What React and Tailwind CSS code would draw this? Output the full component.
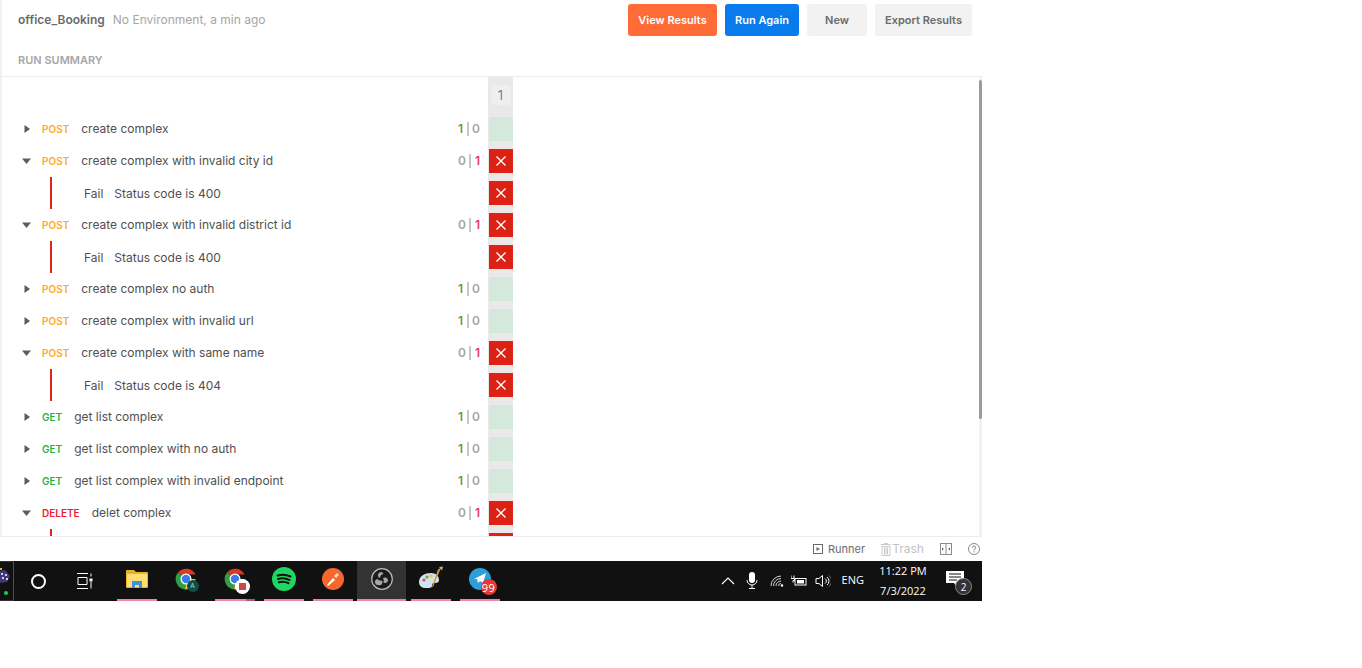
import React from 'react';

const rows = [
  { method: 'POST', name: 'create complex', pass: true },
  { method: 'POST', name: 'create complex with invalid city id', pass: false },
  { fail: 'Status code is 400' },
  { method: 'POST', name: 'create complex with invalid district id', pass: false },
  { fail: 'Status code is 400' },
  { method: 'POST', name: 'create complex no auth', pass: true },
  { method: 'POST', name: 'create complex with invalid url', pass: true },
  { method: 'POST', name: 'create complex with same name', pass: false },
  { fail: 'Status code is 404' },
  { method: 'GET', name: 'get list complex', pass: true },
  { method: 'GET', name: 'get list complex with no auth', pass: true },
  { method: 'GET', name: 'get list complex with invalid endpoint', pass: true },
  { method: 'DELETE', name: 'delet complex', pass: false },
  { fail: '' },
];

const methodColors = {
  POST: 'text-[#ffa826]',
  GET: 'text-[#1fb43f]',
  DELETE: 'text-[#ee1c2e]',
};

const CrossCell = () => (
  <div className="w-6 h-6 bg-[#dc2115] flex items-center justify-center">
    <svg width="12" height="12" viewBox="0 0 12 12">
      <path d="M1.5 1.5l9 9M10.5 1.5l-9 9" stroke="#fff" strokeWidth="1.4" />
    </svg>
  </div>
);

const Row = ({ row }) => {
  if (row.fail !== undefined) {
    return (
      <div className="h-8 shrink-0 flex">
        <div className="w-[488px] shrink-0 flex items-center">
          <div className="ml-[50px] w-0.5 h-8 bg-[#e2231a]" />
          <span className="ml-8 pt-px text-xs text-[#505050]">{row.fail && 'Fail'}</span>
          <span className="ml-[11px] pt-px text-xs text-[#505050]">{row.fail}</span>
        </div>
        <div className="w-[25px] shrink-0 pl-px bg-[#e9e9e9] flex items-start pt-1">
          <CrossCell />
        </div>
      </div>
    );
  }
  return (
    <div className="h-8 shrink-0 flex">
      <div className="w-[488px] shrink-0 flex items-center pr-2">
        <div className="w-[42px] pl-[22px] flex">
          {row.pass ? (
            <svg width="8" height="10" viewBox="0 0 8 10" className="ml-0.5">
              <path d="M0.5 1v8L6 5z" fill="#5c5c5c" />
            </svg>
          ) : (
            <svg width="9" height="6" viewBox="0 0 9 6">
              <path d="M0 0.5h9L4.5 6z" fill="#5c5c5c" />
            </svg>
          )}
        </div>
        <span className={`text-[10px] font-semibold ${methodColors[row.method]}`}>{row.method}</span>
        <span className="ml-3 text-xs text-[#505050]">{row.name}</span>
        <div className="ml-auto flex items-center text-xs font-semibold text-[#a6a6a6]">
          <span className={row.pass ? 'text-[#6f9a2a]' : ''}>{row.pass ? 1 : 0}</span>
          <span className="mx-[3.5px] w-0.5 h-[14px] bg-[#c3c7d0]" />
          <span className={row.pass ? '' : 'text-[#e8336d]'}>{row.pass ? 0 : 1}</span>
        </div>
      </div>
      <div className="w-[25px] shrink-0 pl-px bg-[#e9e9e9] flex items-start pt-1">
        {row.pass ? <div className="w-6 h-6 bg-[#d4e9dc]" /> : <CrossCell />}
      </div>
    </div>
  );
};

const TaskSlot = ({ children, active, line = true, split }) => (
  <div className={`relative w-[49px] h-10 flex items-center justify-center ${active ? 'bg-[#333333]' : ''}`}>
    {children}
    {line && <div className={`absolute bottom-0 h-0.5 bg-[#f47fb2] ${active ? 'left-0 right-0' : 'left-[5px] w-10'}`} />}
    {split && <div className="absolute bottom-0 left-9 w-[9px] h-0.5 bg-[#a85a80]" />}
  </div>
);

const Chrome = ({ children }) => (
  <div className="relative w-[22px] h-[22px] -mt-1">
    <svg width="22" height="22" viewBox="0 0 22 22">
      <path d="M11 11L3 4.5A10.5 10.5 0 0 1 20.5 6.5H11z" fill="#d8392b" />
      <path d="M11 11h9.5A10.5 10.5 0 0 1 10 21.5z" fill="#f6c33b" />
      <path d="M11 11l-1 10.5A10.5 10.5 0 0 1 3 4.5z" fill="#2f9e44" />
      <circle cx="11" cy="11" r="5.5" fill="#fff" />
      <circle cx="11" cy="11" r="4.2" fill="#3b7de8" />
    </svg>
    {children}
  </div>
);

export default function App() {
  return (
    <div className="w-[982px] h-[601px] flex flex-col bg-white font-['Inter',sans-serif]">
      {/* Header */}
      <div className="h-[77px] shrink-0 border-b border-[#ececec] border-l-2 border-l-[#f2f2f2] pl-4 pr-[10px]">
        <div className="flex items-center pt-1 h-9">
          <span className="text-xs font-semibold text-[#6b6b6b]">office_Booking</span>
          <span className="ml-2 text-xs text-[#a6a6a6]">No Environment, a min ago</span>
          <div className="ml-auto flex gap-2 text-[11px] font-semibold">
            <button className="w-[89px] h-8 rounded-[3px] bg-[#ff6c37] text-white">View Results</button>
            <button className="w-[74px] h-8 rounded-[3px] bg-[#097bed] text-white">Run Again</button>
            <button className="w-[60px] h-8 rounded-[3px] bg-[#f2f2f2] text-[#6b6b6b]">New</button>
            <button className="w-[97px] h-8 rounded-[3px] bg-[#f2f2f2] text-[#6b6b6b]">Export Results</button>
          </div>
        </div>
        <div className="mt-4 text-[11px] font-semibold text-[#a6a6a6]">RUN SUMMARY</div>
      </div>

      {/* Results */}
      <div className="h-[459px] shrink-0 flex overflow-hidden border-l-2 border-l-[#f2f2f2]">
        <div className="w-[513px] shrink-0 flex flex-col -ml-0.5 overflow-hidden">
          <div className="h-9 shrink-0 flex">
            <div className="w-[488px] shrink-0" />
            <div className="w-[25px] shrink-0 bg-[#e9e9e9] flex items-start justify-center pt-2">
              <div className="w-5 h-5 pt-px rounded-[3px] bg-[#efefef] flex items-center justify-center text-[13px] text-[#808080]">1</div>
            </div>
          </div>
          {rows.map((row, i) => (
            <Row key={i} row={row} />
          ))}
        </div>
        <div className="flex-1" />
        <div className="w-[3px] bg-[#f2f2f2] pt-[3px]">
          <div className="h-[339px] bg-[#9b9b9b] rounded-sm" />
        </div>
      </div>

      {/* Status bar */}
      <div className="h-[25px] shrink-0 border-t border-[#ececec] flex items-center text-[11px] text-[#6b6b6b]">
        <svg width="10" height="10" viewBox="0 0 10 10" className="ml-[813px]">
          <rect x="0.5" y="0.5" width="9" height="9" fill="none" stroke="#6b6b6b" />
          <path d="M3.5 3v4L7 5z" fill="#6b6b6b" />
        </svg>
        <span className="ml-[5px]">Runner</span>
        <svg width="10" height="13" viewBox="0 0 10 13" className="ml-4">
          <path d="M0 1.5h10M3.5 1.5V.5h3v1M1 3.5h8v9H1zM3.5 4.5v7M5 4.5v7M6.5 4.5v7" fill="none" stroke="#bdbdbd" strokeWidth="0.8" />
        </svg>
        <span className="ml-px text-xs text-[#c2c2c2]">Trash</span>
        <svg width="12" height="12" viewBox="0 0 12 12" className="ml-4">
          <rect x="0.5" y="0.5" width="11" height="11" fill="none" stroke="#8a8a8a" />
          <path d="M6 0v12" stroke="#8a8a8a" />
          <path d="M2 4.5L4 6 2 7.5zM10 4.5L8 6l2 1.5z" fill="#6b6b6b" />
        </svg>
        <svg width="12" height="12" viewBox="0 0 12 12" className="ml-4">
          <circle cx="6" cy="6" r="5.5" fill="none" stroke="#8a8a8a" />
          <path d="M4.4 4.6a1.6 1.6 0 1 1 2.4 1.4c-.5.3-.8.6-.8 1.2M6 8.3v1" fill="none" stroke="#6b6b6b" />
        </svg>
      </div>

      {/* Windows taskbar */}
      <div className="h-10 shrink-0 bg-[#111111] flex items-center text-white font-['Open_Sans',sans-serif]">
        <div className="w-[14px] h-10 border-r border-[#4d4d4d] border-y border-y-[#333333] shrink-0">
          <svg width="13" height="38" viewBox="0 0 13 38">
            <path d="M0 6h2v2H0z" fill="#e8b81e" />
            <path d="M0 9l5-1 5 6-3 6-7 1z" fill="#3e3a78" />
            <path d="M1 11h2v2H1zM5 12h2v2H5zM2 15h2v2H2zM6 16h2v2H6z" fill="#cfcfe8" />
            <circle cx="6" cy="31" r="2" fill="#22c55e" />
          </svg>
        </div>
        <div className="w-12 flex justify-center">
          <div className="w-[15px] h-[15px] rounded-full border-2 border-white" />
        </div>
        <div className="w-[46px] flex justify-center">
          <svg width="16" height="16" viewBox="0 0 16 16">
            <path d="M0 .5h11M1 4.5h9v7H1zM0 15.5h11M14 .5v3M14 9v6.5" fill="none" stroke="#fff" />
            <rect x="12.5" y="5.5" width="3" height="3" fill="#fff" />
          </svg>
        </div>
        <div className="w-[4px]" />
        <TaskSlot>
          <svg width="22" height="18" viewBox="0 0 22 18" className="-mt-1">
            <path d="M0 1a1 1 0 0 1 1-1h7l2 2h11a1 1 0 0 1 1 1v14a1 1 0 0 1-1 1H1a1 1 0 0 1-1-1z" fill="#e8b02c" />
            <path d="M1 4h20v13H1z" fill="#ffdf72" />
            <path d="M6 11h10v7h-3v-3H9v3H6z" fill="#3f93d6" />
          </svg>
        </TaskSlot>
        <TaskSlot line={false}>
          <Chrome>
            <div className="absolute -right-0.5 -bottom-0.5 w-3 h-3 rounded-full bg-[#0d4f44] flex items-center justify-center text-[7px] text-[#b8d6cf]">A</div>
          </Chrome>
        </TaskSlot>
        <TaskSlot split>
          <Chrome>
            <div className="absolute -right-1 -bottom-1 w-[15px] h-[15px] rounded-full bg-white flex items-center justify-center">
              <div className="w-[7px] h-[7px] bg-[#c9484a]" />
            </div>
          </Chrome>
        </TaskSlot>
        <TaskSlot>
          <svg width="24" height="24" viewBox="0 0 24 24" className="-mt-1">
            <circle cx="12" cy="12" r="12" fill="#1ed760" />
            <path d="M5.5 8.5c4.5-1.4 9-1 13 1M6 12c4-1.1 8-.8 11.5 1M6.8 15.3c3.3-.9 6.7-.6 9.7 .9" fill="none" stroke="#111" strokeWidth="2" strokeLinecap="round" />
          </svg>
        </TaskSlot>
        <TaskSlot>
          <svg width="22" height="22" viewBox="0 0 22 22" className="-mt-1">
            <circle cx="11" cy="11" r="11" fill="#f4672e" />
            <path d="M5 17l6-7 2 2-7 6z" fill="#fff" />
            <path d="M12 8l3-3 2 2-3 3z" fill="#ffd9c8" />
          </svg>
        </TaskSlot>
        <TaskSlot active>
          <svg width="22" height="22" viewBox="0 0 22 22" className="-mt-1">
            <circle cx="11" cy="11" r="10.3" fill="#1b1b1b" stroke="#bcbcbc" strokeWidth="1.2" />
            <path d="M8.5 4.5a3 3 0 0 0 .5 5.5A4 4 0 0 1 12.5 6 3 3 0 0 0 8.5 4.5z" fill="#a8a8a8" />
            <path d="M17 12.5a3 3 0 0 0-5-2.2A4 4 0 0 1 12.5 14.5 3 3 0 0 0 17 12.5z" fill="#a8a8a8" />
            <path d="M7.5 17a3 3 0 0 0 3.5-4.5A4 4 0 0 1 6.5 11 3 3 0 0 0 7.5 17z" fill="#a8a8a8" />
          </svg>
        </TaskSlot>
        <TaskSlot>
          <svg width="26" height="26" viewBox="0 0 26 26" className="-mt-1">
            <path d="M1 16C1 10 7 7 13 7c5 0 8 3 8 7 0 3-3 3-5 3-2 0-2 2-2 3 0 2-3 2-6 2-4 0-7-2-7-6z" fill="#cfe3ef" />
            <circle cx="6" cy="14" r="1.6" fill="#d9534f" />
            <circle cx="9" cy="11" r="1.6" fill="#4caf50" />
            <circle cx="13" cy="10" r="1.6" fill="#f1c232" />
            <path d="M24 1l-2 3-7 17-1-.5 6-17z" fill="#d89a3c" />
            <path d="M21 1l4-.5-1 4z" fill="#c9b083" />
          </svg>
        </TaskSlot>
        <TaskSlot>
          <div className="relative w-[22px] h-[22px] -mt-1 rounded-full bg-[#2b9fdc]">
            <svg width="22" height="22" viewBox="0 0 22 22" className="absolute inset-0">
              <path d="M5 11l12-6-3 10-3-2-2 2-1-4z" fill="#fff" />
            </svg>
            <div className="absolute -right-[6px] -bottom-[5px] w-4 h-4 rounded-full bg-[#e53935] flex items-center justify-center text-[11px] tracking-[0.5px] leading-none">99</div>
          </div>
        </TaskSlot>

        {/* Tray */}
        <div className="ml-auto flex items-center">
          <svg width="14" height="8" viewBox="0 0 14 8">
            <path d="M1 7l6-6 6 6" fill="none" stroke="#fff" strokeWidth="1.2" />
          </svg>
          <svg width="12" height="18" viewBox="0 0 12 18" className="ml-[11px]">
            <rect x="3" y="0" width="6" height="11" rx="3" fill="#fff" />
            <path d="M1 8a5 5 0 0 0 10 0M6 13v3M3 16.5h6" fill="none" stroke="#fff" />
          </svg>
          <svg width="14" height="12" viewBox="0 0 14 12" className="ml-[12px]">
            <path d="M1 11a10 10 0 0 1 10-10M3.5 11A7.5 7.5 0 0 1 11 3.5M6 11a5 5 0 0 1 5-5M8.5 11A2.5 2.5 0 0 1 11 8.5" fill="none" stroke="#d0d0d0" />
            <circle cx="12" cy="10.5" r="1.2" fill="#fff" />
          </svg>
          <svg width="16" height="12" viewBox="0 0 16 12" className="ml-[7px]">
            <path d="M0 .5v3M3 .5v3M-.5 3.5h4v2H2v2" fill="none" stroke="#fff" />
            <rect x="4" y="3.5" width="11" height="6.5" fill="none" stroke="#fff" />
            <rect x="6" y="5" width="7" height="3.5" fill="#fff" />
          </svg>
          <svg width="16" height="14" viewBox="0 0 16 14" className="ml-2">
            <path d="M1 4.5h3L7.5 1.5v11L4 9.5H1z" fill="none" stroke="#fff" />
            <path d="M10 4.5a3 3 0 0 1 0 5M12 3a5 5 0 0 1 0 8" fill="none" stroke="#fff" />
            <path d="M14 1.5a7 7 0 0 1 0 11" fill="none" stroke="#777" />
          </svg>
          <span className="ml-[11px] -mt-0.5 text-[11px]">ENG</span>
          <div className="ml-[14px] w-[50px] text-center text-[11px] leading-5 whitespace-nowrap flex flex-col items-center">
            <span>11:22 PM</span>
            <span>7/3/2022</span>
          </div>
          <div className="relative ml-[18px] mr-[18px] w-[18px] h-[16px] -mt-1">
            <svg width="18" height="16" viewBox="0 0 18 16">
              <path d="M0 0h18v12h-6l-2 3-2-3H0z" fill="#fff" />
              <path d="M3 3h12M3 6h12M3 9h8" stroke="#111" />
            </svg>
            <div className="absolute -right-2 -bottom-2 w-[17px] h-[17px] rounded-full bg-[#333333] border border-[#888888] flex items-center justify-center text-[10px] leading-none">2</div>
          </div>
        </div>
      </div>
    </div>
  );
}
